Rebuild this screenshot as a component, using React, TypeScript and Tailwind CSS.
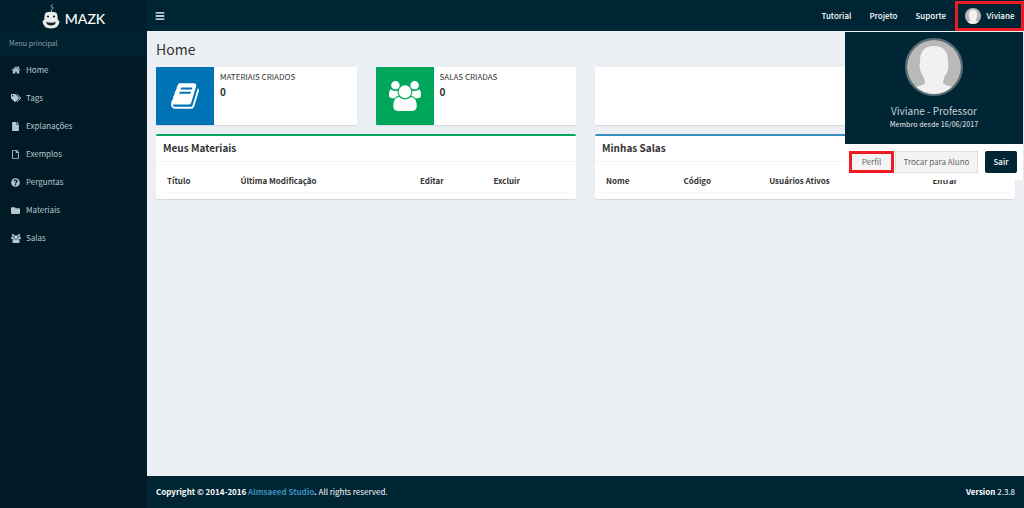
import type { ReactNode } from 'react';
import { FaBars, FaFile, FaFolder, FaQuestionCircle, FaRegFile, FaTags } from 'react-icons/fa';

function HomeIcon() {
  return (
    <svg viewBox="0 0 1792 1792" className="size-[10px]" fill="currentColor" aria-hidden="true">
      <path d="M1472 992v480q0 26-19 45t-45 19h-384v-384h-256v384h-384q-26 0-45-19t-19-45v-480q0-1 .5-3t.5-3l575-474 575 474q1 2 1 6zm223-69l-62 74q-8 9-21 11h-3q-13 0-21-7l-692-577-692 577q-12 8-24 7-13-2-21-11l-62-74q-8-10-7-23.5t11-21.5l719-599q32-26 76-26t76 26l244 204v-195q0-14 9-23t23-9h192q14 0 23 9t9 23v408l219 182q10 8 11 21.5t-7 23.5z" />
    </svg>
  );
}

function BookIcon() {
  return (
    <svg viewBox="0 0 1664 1792" className="h-[30px] w-7" fill="currentColor" aria-hidden="true">
      <path d="M1639 478q40 57 18 129l-275 906q-19 64-76.5 107.5t-122.5 43.5h-923q-77 0-148.5-53.5t-99.5-131.5q-24-67-2-127 0-4 3-27t4-37q1-8-3-21.5t-3-19.5q2-11 8-21t16.5-23.5 16.5-23.5q23-38 45-91.5t30-91.5q3-10 .5-30t-.5-28q3-11 17-28t17-23q21-36 42-92t25-90q1-9-2.5-32t.5-28q4-13 22-30.5t22-22.5q19-26 42.5-84.5t27.5-96.5q1-8-3-25.5t-2-26.5q2-8 9-18t18-23 17-21q8-12 16.5-30.5t15-35 16-36 19.5-32 26.5-23.5 36-11.5 47.5 5.5l-1 3q38-9 51-9h761q74 0 114 56t18 130l-274 906q-36 119-71.5 153.5t-128.5 34.5h-869q-27 0-38 15-11 16-1 43 24 70 144 70h923q29 0 56-15.5t35-41.5l300-987q7-22 5-57 38 15 59 43zm-1064 2q-4 13 2 22.5t20 9.5h608q13 0 25.5-9.5t16.5-22.5l21-64q4-13-2-22.5t-20-9.5h-608q-13 0-25.5 9.5t-16.5 22.5zm-83 256q-4 13 2 22.5t20 9.5h608q13 0 25.5-9.5t16.5-22.5l21-64q4-13-2-22.5t-20-9.5h-608q-13 0-25.5 9.5t-16.5 22.5z" />
    </svg>
  );
}

function GroupIcon({ className }: { className: string }) {
  return (
    <svg viewBox="0 0 1920 1792" className={className} fill="currentColor" aria-hidden="true">
      <path d="M593 896q-162 5-265 128h-134q-82 0-138-40.5t-56-118.5q0-353 124-353 6 0 43.5 21t97.5 42.5 119 21.5q67 0 133-23-5 37-5 66 0 139 81 256zm1071 637q0 120-73 189.5t-194 69.5h-874q-121 0-194-69.5t-73-189.5q0-53 3.5-103.5t14-109 26.5-108.5 43-97.5 62-81 85.5-53.5 111.5-20q10 0 43 21.5t73 48 107 48 135 21.5 135-21.5 107-48 73-48 43-21.5q61 0 111.5 20t85.5 53.5 62 81 43 97.5 26.5 108.5 14 109 3.5 103.5zm-1024-1277q0 106-75 181t-181 75-181-75-75-181 75-181 181-75 181 75 75 181zm704 384q0 159-112.5 271.5t-271.5 112.5-271.5-112.5-112.5-271.5 112.5-271.5 271.5-112.5 271.5 112.5 112.5 271.5zm576 225q0 78-56 118.5t-138 40.5h-134q-103-123-265-128 81-117 81-256 0-29-5-66 66 23 133 23 59 0 119-21.5t97.5-42.5 43.5-21q124 0 124 353zm-128-609q0 106-75 181t-181 75-181-75-75-181 75-181 181-75 181 75 75 181z" />
    </svg>
  );
}

function RobotLogo() {
  return (
    <svg viewBox="0 0 18 26" className="h-[26px] w-[18px]" aria-hidden="true">
      <path d="M9.500 9V6.500L11.500 5 9 3.500 10.500 1" fill="none" stroke="#8fb3b8" strokeWidth="0.9" />
      <path d="M4 9.500Q9 8 14 9.500Q15.500 10 15.800 17L17.500 18Q17 25.500 9 25.500T0.500 18L2.200 17Q2.500 10 4 9.500Z" fill="#eceeee" />
      <path d="M1 18Q9 19.500 17 18" fill="none" stroke="#cfd3d5" strokeWidth="0.5" />
      <circle cx="6" cy="13.500" r="1.100" fill="#16242c" />
      <circle cx="12" cy="13.500" r="1.100" fill="#16242c" />
      <path d="M4 19Q9 20.500 14 19Q13 22.500 9 22.500T4 19Z" fill="#16242c" />
    </svg>
  );
}

function Avatar({ className }: { className: string }) {
  return (
    <svg viewBox="0 0 54 54" className={`rounded-full ${className}`} role="img" aria-label="Viviane">
      <rect width="54" height="54" fill="#b9b9b9" />
      <path d="M27 6C17 6 13 12 13 21C13 24 12 25 13 29C14 34 16 35 17 38L18 43Q17 45 8 47V54H46V47Q37 45 36 43L37 38C38 35 40 34 41 29C42 25 41 24 41 21C41 12 37 6 27 6Z" fill="#f1f1f1" />
    </svg>
  );
}

const menu: { label: string; icon: ReactNode }[] = [
  { label: 'Home', icon: <HomeIcon /> },
  { label: 'Tags', icon: <FaTags className="size-[10px]" /> },
  { label: 'Explanações', icon: <FaFile className="size-[9px]" /> },
  { label: 'Exemplos', icon: <FaRegFile className="size-[9px]" /> },
  { label: 'Perguntas', icon: <FaQuestionCircle className="size-[9px]" /> },
  { label: 'Materiais', icon: <FaFolder className="size-[9px]" /> },
  { label: 'Salas', icon: <GroupIcon className="h-[9px] w-[10px]" /> },
];

const materialCols = [
  { label: 'Título', width: 'w-[18%]' },
  { label: 'Última Modificação', width: 'w-[44%]' },
  { label: 'Editar', width: 'w-[18%]' },
  { label: 'Excluir', width: 'w-[20%]' },
];

const roomCols = [
  { label: 'Nome', width: 'w-[19%]' },
  { label: 'Código', width: 'w-[21%]' },
  { label: 'Usuários Ativos', width: 'w-[40%]' },
  { label: 'Entrar', width: 'w-[20%]' },
];

function InfoBox({ label, value, color, children }: { label: string; value: number; color: string; children: ReactNode }) {
  return (
    <div className="flex h-[58px] overflow-hidden rounded-[1px] bg-white shadow-[0_1px_1px_rgba(0,0,0,0.1)]">
      <div className={`flex w-[58px] shrink-0 items-center justify-center text-white ${color}`}>{children}</div>
      <div className="px-[6px] py-1">
        <div className="leading-3 uppercase">{label}</div>
        <div className="mt-px text-[10px] leading-4 font-bold">{value}</div>
      </div>
    </div>
  );
}

function Panel({ title, accent, cols }: { title: string; accent: string; cols: { label: string; width: string }[] }) {
  return (
    <section className={`rounded-[2px] border-t-2 bg-white shadow-[0_1px_1px_rgba(0,0,0,0.1)] ${accent}`}>
      <h2 className="border-b border-[#f4f4f4] px-[7px] pt-1 pb-[5px] text-[10px] leading-4 font-bold">{title}</h2>
      <div className="p-[6px]">
        <table className="w-full table-fixed border-collapse">
          <thead>
            <tr className="border-b border-[#f4f4f4]">
              {cols.map((col) => (
                <th key={col.label} scope="col" className={`px-[5px] pt-[7px] pb-[5px] text-left leading-3 font-semibold whitespace-nowrap ${col.width}`}>
                  {col.label}
                </th>
              ))}
            </tr>
          </thead>
        </table>
      </div>
    </section>
  );
}

function UserMenu() {
  return (
    <div className="absolute top-full right-0 z-10 mt-px w-[179px] border-r border-[#e4e8ea] bg-white">
      <div className="flex h-28 flex-col items-center bg-[#002635] pt-[6px] text-[#c9d1d5]">
        <Avatar className="size-[58px] border-2 border-[#5b6e78]" />
        <p className="mt-[7px] text-[10px] leading-4">Viviane - Professor</p>
        <p className="text-[7px] leading-[10px] font-medium">Membro desde 16/06/2017</p>
      </div>
      <div className="flex items-center py-[7px] pr-[6px] pl-1 text-[#666]">
        <button type="button" className="h-[22px] w-[45px] border-[3px] border-[#ed1c24] bg-[#f4f4f4] leading-3">
          Perfil
        </button>
        <button type="button" className="ml-px h-[22px] w-[83px] border border-[#ddd] bg-[#f4f4f4] leading-3 whitespace-nowrap">
          Trocar para Aluno
        </button>
        <button type="button" className="ml-auto h-[22px] w-8 rounded-[2px] bg-[#002635] leading-3 font-medium text-white">
          Sair
        </button>
      </div>
    </div>
  );
}

export default function App() {
  return (
    <div className="flex min-h-screen bg-[#ecf0f5] font-['Noto_Sans_CJK_SC','Noto_Sans',sans-serif] text-[8px] text-[#333]">
      <aside className="w-[147px] shrink-0 bg-[#001a26] text-[#b8c7ce]">
        <a href="#home" className="flex h-[31px] items-center justify-center gap-[5px] bg-[#001e2b] text-white">
          <RobotLogo />
          <span className="pt-[7px] font-['Lato',sans-serif] text-[14px] leading-4 font-medium">MAZK</span>
        </a>
        <div className="bg-[#002230] px-[9px] py-[6px] text-[7px] leading-3 text-[#8ba0aa]">Menu principal</div>
        <nav className="pt-px">
          {menu.map((item) => (
            <a key={item.label} href="#menu" className="flex h-7 items-center gap-[5px] px-[10px] hover:text-white">
              <span className="flex w-[11px] justify-center">{item.icon}</span>
              {item.label}
            </a>
          ))}
        </nav>
      </aside>

      <div className="flex min-w-0 flex-1 flex-col">
        <header className="relative flex h-[31px] items-center justify-between bg-[#002635] text-white">
          <button type="button" aria-label="Menu" className="px-2 py-2">
            <FaBars className="size-[10px]" />
          </button>
          <nav className="flex h-full items-center font-medium">
            <a href="#tutorial" className="px-[9px]">Tutorial</a>
            <a href="#projeto" className="px-[9px]">Projeto</a>
            <a href="#suporte" className="px-[9px]">Suporte</a>
            <button type="button" aria-expanded="true" className="flex h-[30px] w-[69px] items-center justify-center gap-[6px] self-end border-[3px] border-[#ed1c24]">
              <Avatar className="size-4" />
              Viviane
            </button>
          </nav>
          <UserMenu />
        </header>

        <main className="flex-1 px-[9px] pt-[9px]">
          <h1 className="text-[14px] leading-[18px]">Home</h1>
          <div className="mt-[9px] grid grid-cols-4 gap-[19px]">
            <InfoBox label="Materiais criados" value={0} color="bg-[#0073b7]">
              <BookIcon />
            </InfoBox>
            <InfoBox label="Salas criadas" value={0} color="bg-[#00a65a]">
              <GroupIcon className="h-[30px] w-8" />
            </InfoBox>
            <div className="col-span-2 rounded-[1px] bg-white shadow-[0_1px_1px_rgba(0,0,0,0.1)]" />
          </div>
          <div className="mt-[9px] grid grid-cols-2 gap-[19px]">
            <Panel title="Meus Materiais" accent="border-[#00a65a]" cols={materialCols} />
            <Panel title="Minhas Salas" accent="border-[#3c8dbc]" cols={roomCols} />
          </div>
        </main>

        <footer className="flex h-8 items-center justify-between bg-[#002635] px-[9px] text-white">
          <p>
            <strong>
              Copyright © 2014-2016 <a href="#studio" className="text-[#3c8dbc]">Almsaeed Studio</a>.
            </strong>{' '}
            All rights reserved.
          </p>
          <p>
            <strong>Version</strong> 2.3.8
          </p>
        </footer>
      </div>
    </div>
  );
}
